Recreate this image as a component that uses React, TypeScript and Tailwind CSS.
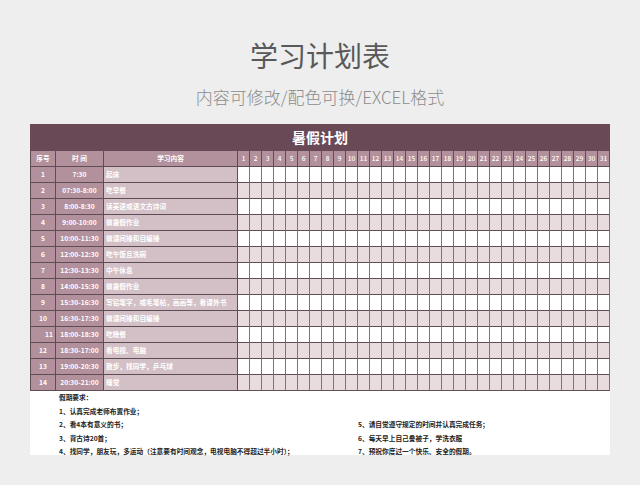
import React from "react"

const rows = [
  { no: "1", time: "7:30", task: "起床" },
  { no: "2", time: "07:30-8:00", task: "吃早餐" },
  { no: "3", time: "8:00-8:30", task: "读英语或语文古诗词" },
  { no: "4", time: "9:00-10:00", task: "做暑假作业" },
  { no: "5", time: "10:00-11:30", task: "做课间操和自编操" },
  { no: "6", time: "12:00-12:30", task: "吃午饭且洗碗" },
  { no: "7", time: "12:30-13:30", task: "中午休息" },
  { no: "8", time: "14:00-15:30", task: "做暑假作业" },
  { no: "9", time: "15:30-16:30", task: "写铅笔字，或毛笔帖，画画等，看课外书" },
  { no: "10", time: "16:30-17:30", task: "做课间操和自编操" },
  { no: "11", time: "18:00-18:30", task: "吃晚餐" },
  { no: "12", time: "18:30-17:00", task: "看电视、电脑" },
  { no: "13", time: "19:00-20:30", task: "散步，找同学，乒乓球" },
  { no: "14", time: "20:30-21:00", task: "睡觉" },
]

const days = Array.from({ length: 31 }, (_, i) => i + 1)

const cell = "h-4 border-r border-b border-[#5f4d56] flex items-center"

export default function App() {
  return (
    <div className="w-[640px] h-[485px] bg-[#eeeeee] font-['Noto_Sans_CJK_SC','Noto_Sans',sans-serif] overflow-hidden">
      <div className="pt-[38px] text-center">
        <h1 className="text-[28px] leading-[34px] font-normal text-[#595959]">学习计划表</h1>
        <p className="mt-[13px] text-[17px] leading-[24px] font-light text-[#8c8c8c]">内容可修改/配色可换/EXCEL格式</p>
      </div>

      <div className="mx-auto mt-[15px] w-[580px]">
        <div className="h-[27px] bg-[#6a4957] flex items-center justify-center text-white text-[14px] font-bold">
          暑假计划
        </div>

        <div className="grid grid-cols-[26px_48px_134px_repeat(31,12px)] text-white text-[6.7px] font-bold leading-none">
          <div className={`${cell} border-l justify-center bg-[#b3919c]`}>序号</div>
          <div className={`${cell} justify-center bg-[#b3919c]`}>时 间</div>
          <div className={`${cell} justify-center bg-[#b3919c]`}>学习内容</div>
          {days.map((d) => (
            <div key={d} className={`${cell} justify-center bg-[#b3919c] text-[6.5px] font-medium`}>
              {d}
            </div>
          ))}

          {rows.map((r, i) => (
            <React.Fragment key={r.no}>
              <div
                className={`${cell} border-l bg-[#b3919c] ${r.no === "11" ? "justify-end pr-[2px]" : "justify-center"}`}
              >
                {r.no}
              </div>
              <div className={`${cell} justify-center bg-[#b3919c]`}>{r.time}</div>
              <div className={`${cell} bg-[#d3bfc6] pl-[2px] whitespace-nowrap`}>{r.task}</div>
              {days.map((d) => (
                <div
                  key={d}
                  className={`${cell} border-r-[#7d7479] ${i % 2 === 1 ? "bg-[#e8dcdf]" : "bg-white"}`}
                />
              ))}
            </React.Fragment>
          ))}
        </div>

        <div className="bg-white h-[64px] pl-[29px] text-[6.7px] font-bold text-[#222222] leading-[13.6px]">
          <div>假期要求：</div>
          <div>1、认真完成老师布置作业；</div>
          <div className="flex">
            <div className="w-[299px]">2、看4本有意义的书；</div>
            <div>5、请自觉遵守规定的时间并认真完成任务；</div>
          </div>
          <div className="flex">
            <div className="w-[299px]">3、背古诗20首；</div>
            <div>6、每天早上自己叠被子，学洗衣服</div>
          </div>
          <div className="flex">
            <div className="w-[299px] whitespace-nowrap">4、找同学，朋友玩，多运动（注意要有时间观念，电视电脑不得超过半小时）；</div>
            <div>7、预祝你度过一个快乐、安全的假期。</div>
          </div>
        </div>
      </div>
    </div>
  )
}
